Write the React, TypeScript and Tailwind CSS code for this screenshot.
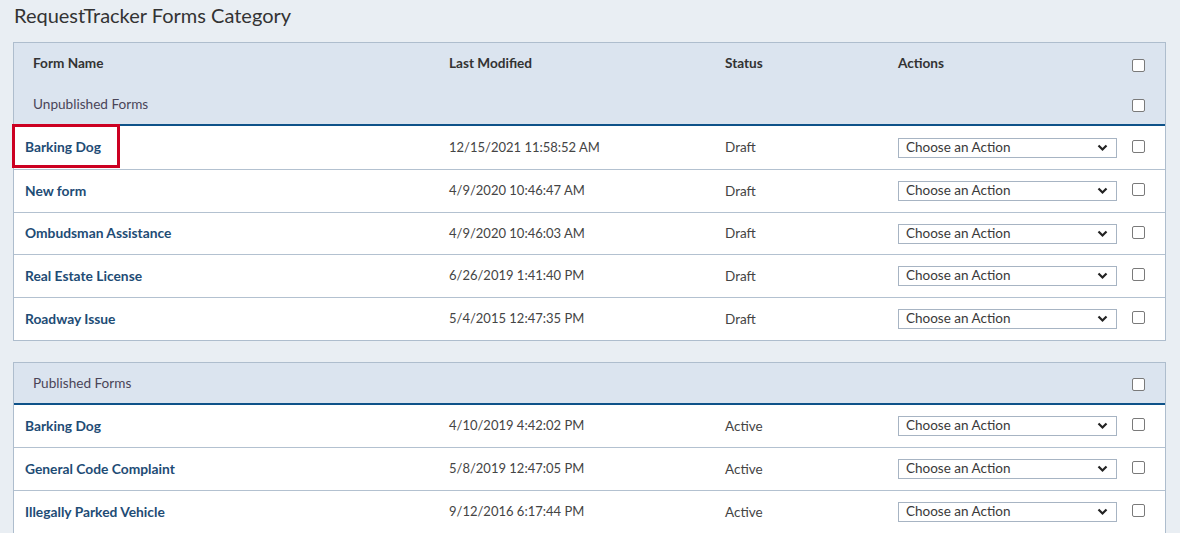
import React from "react";

type Row = { name: string; date: string; status: string };

const unpublished: Row[] = [
  { name: "Barking Dog", date: "12/15/2021 11:58:52 AM", status: "Draft" },
  { name: "New form", date: "4/9/2020 10:46:47 AM", status: "Draft" },
  { name: "Ombudsman Assistance", date: "4/9/2020 10:46:03 AM", status: "Draft" },
  { name: "Real Estate License", date: "6/26/2019 1:41:40 PM", status: "Draft" },
  { name: "Roadway Issue", date: "5/4/2015 12:47:35 PM", status: "Draft" },
];

const published: Row[] = [
  { name: "Barking Dog", date: "4/10/2019 4:42:02 PM", status: "Active" },
  { name: "General Code Complaint", date: "5/8/2019 12:47:05 PM", status: "Active" },
  { name: "Illegally Parked Vehicle", date: "9/12/2016 6:17:44 PM", status: "Active" },
];

const grid = "grid grid-cols-[435px_276px_173px_234px_1fr] items-center";

function Check() {
  return <span className="block w-[13px] h-[13px] rounded-[2px] border border-[#7a7a7a] bg-white" />;
}

function Select() {
  return (
    <div className="flex items-center justify-between w-[219px] h-[20px] border border-[#a7b4c3] bg-white pl-[7px] pr-[8px] text-[13.5px] text-[#3a3a3a] leading-none">
      <span>Choose an Action</span>
      <svg width="11" height="8" viewBox="0 0 11 8">
        <path d="M1.5 1.5 L5.5 5.5 L9.5 1.5" fill="none" stroke="#222" strokeWidth="2.2" />
      </svg>
    </div>
  );
}

function DataRow({ r, first, highlight, short }: { r: Row; first?: boolean; highlight?: boolean; short?: boolean }) {
  return (
    <div className={`${grid} ${short ? "h-[42px]" : "h-[43px]"} bg-white ${first ? "" : "border-t border-[#b3c1d0]"}`}>
      <div className="relative pl-[11px] h-full flex items-center">
        <span className="font-bold text-[13.8px] text-[#1e4c75]">{r.name}</span>
        {highlight && (
          <span className="absolute left-[-2px] top-[-2px] w-[108px] h-[44px] border-[3px] border-[#cc0022]" />
        )}
      </div>
      <div className="text-[13px] text-[#444]">{r.date}</div>
      <div className="text-[13.5px] text-[#444]">{r.status}</div>
      <div><Select /></div>
      <div className="-mt-[3px]"><Check /></div>
    </div>
  );
}

export default function App() {
  return (
    <div
      className="w-[1180px] h-[533px] overflow-hidden bg-[#e9eef3] pl-[13px] pr-[14px]"
      style={{ fontFamily: "Lato, 'Open Sans', sans-serif" }}
    >
      <div className="h-[42px] pl-[1px] pt-[3px] text-[20px] text-[#333] leading-[24px]">
        RequestTracker Forms Category
      </div>

      <div className="border border-[#aebdcd]">
        <div className="bg-[#dbe4ef]">
          <div className={`${grid} h-[41px]`}>
            <div className="pl-[19px] font-bold text-[13.6px] text-[#333]">Form Name</div>
            <div className="font-bold text-[13.6px] text-[#333]">Last Modified</div>
            <div className="font-bold text-[13.6px] text-[#333]">Status</div>
            <div className="font-bold text-[13.6px] text-[#333]">Actions</div>
            <div className="mt-[3px]"><Check /></div>
          </div>
          <div className={`${grid} h-[40px]`}>
            <div className="pl-[19px] text-[13.6px] text-[#4a4458]">Unpublished Forms</div>
            <div />
            <div />
            <div />
            <div className="mt-[2px]"><Check /></div>
          </div>
        </div>
        <div className="h-[2px] bg-[#0e5289]" />
        {unpublished.map((r, i) => (
          <DataRow key={i} r={r} first={i === 0} highlight={i === 0} short={i === 2} />
        ))}
      </div>

      <div className="h-[21px]" />

      <div className="border border-[#aebdcd]">
        <div className={`${grid} h-[40px] bg-[#dbe4ef]`}>
          <div className="pl-[19px] text-[13.6px] text-[#4a4458]">Published Forms</div>
          <div />
          <div />
          <div />
          <div className="mt-[2px]"><Check /></div>
        </div>
        <div className="h-[2px] bg-[#0e5289]" />
        {published.map((r, i) => (
          <DataRow key={i} r={r} first={i === 0} short={i === 0} />
        ))}
      </div>
    </div>
  );
}
